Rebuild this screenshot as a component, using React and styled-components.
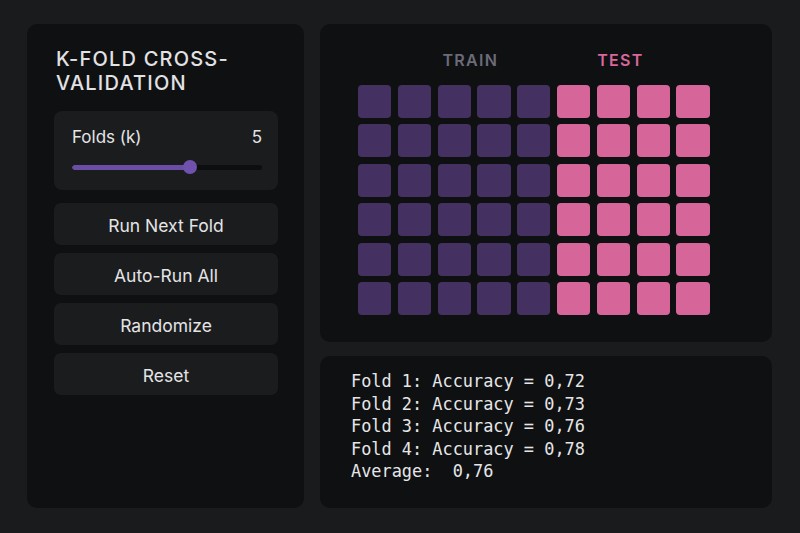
import React, { useState } from 'react';
import styled, { createGlobalStyle } from 'styled-components';

const GlobalStyle = createGlobalStyle`
  body {
    margin: 0;
    background: #1a1b1d;
    font-family: Inter, "Noto Sans", sans-serif;
    color: #e4e4e6;
  }
`;

const Page = styled.div`
  display: grid;
  grid-template-columns: 277px 452px;
  column-gap: 16px;
  padding: 24px 0 25px 27px;
  height: 484px;
`;

const SidePanel = styled.div`
  background: #0f1012;
  border-radius: 10px;
  padding: 23px 26px 0 27px;
`;

const Title = styled.h1`
  margin: 0 0 16px 2px;
  font-size: 20px;
  line-height: 24px;
  font-weight: 500;
  letter-spacing: 1.2px;
  color: #e2e2e4;
`;

const SliderCard = styled.div`
  background: #1b1c1e;
  border-radius: 8px;
  padding: 14px 16px 16px 18px;
`;

const SliderHead = styled.div`
  display: flex;
  justify-content: space-between;
  font-size: 17px;
  line-height: 24px;
  color: #e4e4e6;
`;

const Track = styled.div`
  position: relative;
  margin-top: 11px;
  height: 14px;
  display: flex;
  align-items: center;
`;

const Rail = styled.div`
  flex: 1;
  height: 5px;
  border-radius: 3px;
  background: #0d0e10;
  overflow: hidden;
`;

const Fill = styled.div`
  height: 100%;
  background: #6a4ea6;
  border-radius: 3px;
`;

const Thumb = styled.div`
  position: absolute;
  top: 0;
  width: 14px;
  height: 14px;
  margin-left: -7px;
  border-radius: 50%;
  background: #7051ae;
`;

const Buttons = styled.div`
  display: flex;
  flex-direction: column;
  gap: 8px;
  margin-top: 13px;
`;

const Button = styled.button`
  height: 42px;
  border: none;
  border-radius: 7px;
  background: #1b1c1e;
  color: #e4e4e6;
  font-family: Inter, "Noto Sans", sans-serif;
  font-size: 17.5px;
  padding: 2px 0 0;
`;

const RightCol = styled.div`
  display: flex;
  flex-direction: column;
  gap: 14px;
`;

const GridPanel = styled.div`
  background: #0f1012;
  border-radius: 10px;
  height: 318px;
  box-sizing: border-box;
  padding-top: 26px;
`;

const Legend = styled.div`
  display: flex;
  justify-content: center;
  gap: 99px;
  padding-right: 6px;
`;

const LegendLabel = styled.span`
  font-size: 16px;
  line-height: 20px;
  font-weight: 600;
  letter-spacing: 1.3px;
  color: ${p => p.$color};
`;

const Grid = styled.div`
  display: grid;
  grid-template-columns: repeat(9, 33.3px);
  grid-auto-rows: 33px;
  column-gap: 6.5px;
  row-gap: 6.4px;
  margin: 15px 0 0 38px;
`;

const Cell = styled.div`
  border-radius: 4px;
  background: ${p => (p.$test ? '#d6669a' : '#443161')};
`;

const ResultPanel = styled.div`
  flex: 1;
  background: #0f1012;
  border-radius: 10px;
  padding: 14px 0 0 31px;
`;

const ResultLine = styled.div`
  font-family: "DejaVu Sans Mono", "Liberation Mono", monospace;
  font-size: 16.9px;
  line-height: 22.5px;
  white-space: pre;
  color: #e6e6e8;
`;

const results = [
  'Fold 1: Accuracy = 0,72',
  'Fold 2: Accuracy = 0,73',
  'Fold 3: Accuracy = 0,76',
  'Fold 4: Accuracy = 0,78',
  'Average:  0,76',
];

export default function App() {
  const [k] = useState(5);
  const pct = 62;

  const cells = [];
  for (let r = 0; r < 6; r++) {
    for (let c = 0; c < 9; c++) {
      cells.push(<Cell key={`${r}-${c}`} $test={c >= 5} />);
    }
  }

  return (
    <>
      <GlobalStyle />
      <Page>
        <SidePanel>
          <Title>K-FOLD CROSS-<br />VALIDATION</Title>
          <SliderCard>
            <SliderHead>
              <span>Folds (k)</span>
              <span>{k}</span>
            </SliderHead>
            <Track>
              <Rail>
                <Fill style={{ width: `${pct}%` }} />
              </Rail>
              <Thumb style={{ left: `${pct}%` }} />
            </Track>
          </SliderCard>
          <Buttons>
            <Button>Run Next Fold</Button>
            <Button>Auto-Run All</Button>
            <Button>Randomize</Button>
            <Button>Reset</Button>
          </Buttons>
        </SidePanel>
        <RightCol>
          <GridPanel>
            <Legend>
              <LegendLabel $color="#6c6b78">TRAIN</LegendLabel>
              <LegendLabel $color="#d8679b">TEST</LegendLabel>
            </Legend>
            <Grid>{cells}</Grid>
          </GridPanel>
          <ResultPanel>
            {results.map(line => (
              <ResultLine key={line}>{line}</ResultLine>
            ))}
          </ResultPanel>
        </RightCol>
      </Page>
    </>
  );
}
